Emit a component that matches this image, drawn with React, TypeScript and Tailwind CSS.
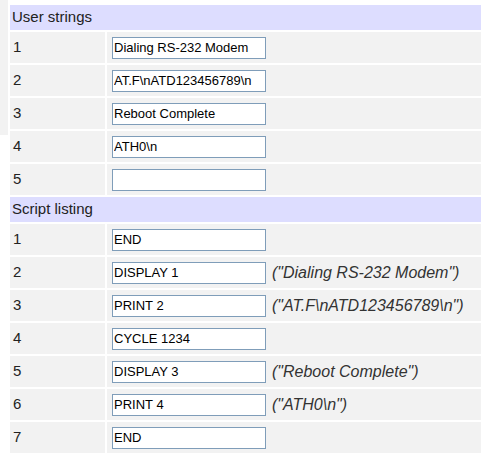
const userStrings = [
  "Dialing RS-232 Modem",
  "AT.F\\nATD123456789\\n",
  "Reboot Complete",
  "ATH0\\n",
  "",
];

const script: { cmd: string; note?: string }[] = [
  { cmd: "END" },
  { cmd: "DISPLAY 1", note: '("Dialing RS-232 Modem")' },
  { cmd: "PRINT 2", note: '("AT.F\\nATD123456789\\n")' },
  { cmd: "CYCLE 1234" },
  { cmd: "DISPLAY 3", note: '("Reboot Complete")' },
  { cmd: "PRINT 4", note: '("ATH0\\n")' },
  { cmd: "END" },
];

const SectionHeader = ({ title }: { title: string }) => (
  <div className="h-[25px] bg-[#ddddff] pl-[2px] flex items-center text-[15px] text-[#222]">
    {title}
  </div>
);

const Row = ({ n, value, note }: { n: number; value: string; note?: string }) => (
  <div className="flex gap-[2px] h-[31px]">
    <div className="w-[95px] shrink-0 bg-[#f2f2f2] pl-[3px] flex items-center text-[15px] text-[#222]">
      {n}
    </div>
    <div className="flex-1 bg-[#f2f2f2] pl-[5px] flex items-center gap-[6px]">
      <input
        readOnly
        value={value}
        className="w-[154px] h-[22px] border border-[#7f9db9] bg-white px-[1px] text-[13px] text-black outline-none"
      />
      {note && <span className="italic text-[16px] text-[#333] whitespace-nowrap">{note}</span>}
    </div>
  </div>
);

export default function App() {
  return (
    <div className="flex bg-white w-[481px] h-[456px] overflow-hidden" style={{ fontFamily: '"Liberation Sans", Arial, sans-serif' }}>
      <div className="w-[8px] h-[135px] bg-[#f2f2f2] shrink-0" />
      <div className="flex-1 flex flex-col gap-[2px] pt-[5px] pl-[2px]">
        <SectionHeader title="User strings" />
        {userStrings.map((s, i) => (
          <Row key={`u${i}`} n={i + 1} value={s} />
        ))}
        <SectionHeader title="Script listing" />
        {script.map((s, i) => (
          <Row key={`s${i}`} n={i + 1} value={s.cmd} note={s.note} />
        ))}
      </div>
    </div>
  );
}
